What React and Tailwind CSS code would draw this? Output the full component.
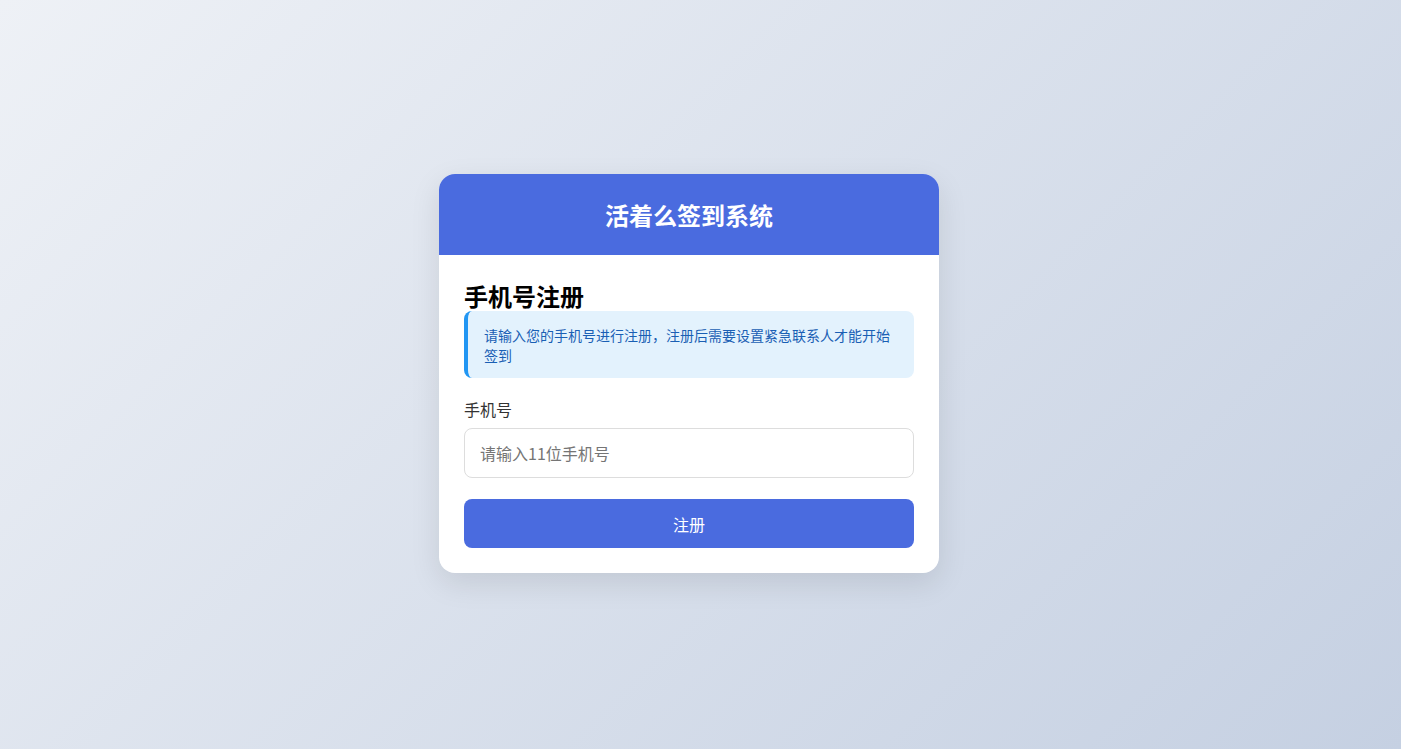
import React from 'react';

function App() {
    return (
        <div className="min-h-screen w-full flex items-center justify-center pr-[23px] pb-[2px] bg-[linear-gradient(135deg,#eef1f6_0%,#c5d0e2_100%)] font-['Noto_Sans_CJK_SC','Noto_Sans',sans-serif]">
            <div className="w-[500px] bg-white rounded-[16px] overflow-hidden shadow-[0_10px_30px_rgba(0,0,0,0.1)]">
                <div className="h-[81px] bg-[#4a6bdf] flex items-center justify-center">
                    <h1 className="text-white text-[24px] font-bold leading-none">活着么签到系统</h1>
                </div>
                <div className="px-[25px] pt-[25px] pb-[25px]">
                    <h2 className="text-[24px] font-bold leading-[31px] text-black">手机号注册</h2>
                    <div className="bg-[#e3f2fd] border-l-4 border-[#2196f3] rounded-[8px] pl-4 pr-[15px] pt-[14px] pb-[13px] text-[14px] leading-[20px] text-[#1a5fb4]">
                        请输入您的手机号进行注册，注册后需要设置紧急联系人才能开始签到
                    </div>
                    <div className="mt-[20px]">
                        <label className="block text-[16px] leading-[22px] text-[#333] mb-[8px]">手机号</label>
                        <input
                            type="tel"
                            placeholder="请输入11位手机号"
                            className="w-full h-[50px] border border-[#ddd] rounded-[8px] px-[15px] text-[16px] text-[#333] placeholder:text-[#757575] outline-none"
                        />
                    </div>
                    <button className="mt-[21px] w-full h-[49px] bg-[#4a6bdf] text-white text-[16px] rounded-[8px]">
                        注册
                    </button>
                </div>
            </div>
        </div>
    );
}

export default App;
